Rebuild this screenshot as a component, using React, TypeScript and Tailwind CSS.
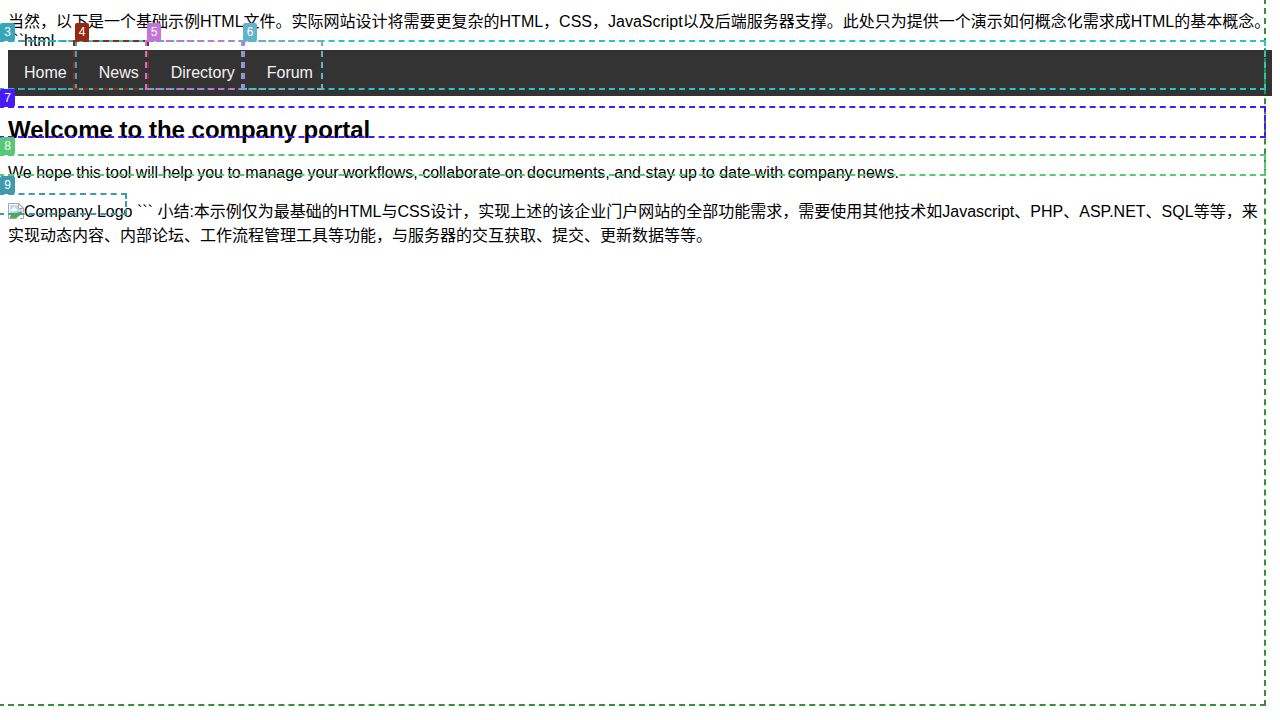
type Mark = { id: string; label?: string; box: string; tag?: string };

const marks: Mark[] = [
  { id: "page", box: "-left-0.5 -top-0.5 right-[14px] bottom-[14px] border-[#388e3c]" },
  { id: "nav", box: "-left-0.5 top-[40px] right-[14px] h-[50px] border-[#26c6c6]" },
  { id: "home", label: "3", box: "-left-0.5 top-[40px] w-[79px] h-[50px] border-[#36a6b8]", tag: "w-[15px] bg-[#36a6b8]" },
  { id: "news", label: "4", box: "left-[73px] top-[40px] w-[76px] h-[50px] border-[#942810]", tag: "w-3.5 bg-[#942810]" },
  { id: "directory", label: "5", box: "left-[145px] top-[40px] w-[100px] h-[50px] border-[#c473d8]", tag: "w-3.5 bg-[#c473d8]" },
  { id: "forum", label: "6", box: "left-[241px] top-[40px] w-[82px] h-[50px] border-[#63b2c8]", tag: "w-3.5 bg-[#63b2c8]" },
  { id: "title", label: "7", box: "-left-0.5 top-[106px] right-[14px] h-[32px] border-[#4619ff]", tag: "w-[15px] bg-[#4619ff]" },
  { id: "intro", label: "8", box: "-left-0.5 top-[154px] right-[14px] h-[22px] border-[#57c878]", tag: "w-[15px] bg-[#57c878]" },
  { id: "logo", label: "9", box: "-left-0.5 top-[193px] w-[129px] h-[22px] border-[#409aab]", tag: "w-[15px] bg-[#409aab]" },
];

const links = ["Home", "News", "Directory", "Forum"];

function BrokenImage() {
  return (
    <svg className="inline-block size-4 align-[-2px]" viewBox="0 0 16 16" aria-hidden="true">
      <path d="M.5.5h10.500l4.500 4.500v10.500H.5z" fill="#fff" stroke="#a6a6a6" />
      <path d="M2 2h8.500v4H14v8H2z" fill="#c1d7f7" />
      <path d="M3 8C2.300 6.500 3.300 5.500 4.300 5.700 5 3.700 7.500 4 7.700 5.800 9.300 5.800 9.300 8 8 8z" fill="#fff" />
      <path d="M2 14c1.500-3 4.500-4.500 7.500-4.500L14 8.500v2L8.500 15H2z" fill="#52ae3d" />
      <path d="M10.500.5v5h5z" fill="#fff" stroke="#a6a6a6" />
      <path d="M8 16l8-7v2.500L11.500 16z" fill="#fff" />
    </svg>
  );
}

export default function App() {
  return (
    <div className="relative min-h-screen overflow-hidden bg-white p-2 font-['Liberation_Sans','Noto_Sans_CJK_SC',sans-serif] text-base leading-[normal] text-black">
      <p className="whitespace-nowrap">
        当然，以下是一个基础示例HTML文件。实际网站设计将需要更复杂的HTML，CSS，JavaScript以及后端服务器支撑。此处只为提供一个演示如何概念化需求成HTML的基本概念。
      </p>
      <p className="leading-[18px]">```html</p>
      <nav className="flex bg-[#333]">
        {links.map((name) => (
          <a key={name} href="#" className="px-4 py-3.5 leading-[18px] text-[#f2f2f2]">
            {name}
          </a>
        ))}
      </nav>
      <h2 className="my-5 text-2xl leading-7 font-bold">Welcome to the company portal</h2>
      <p className="my-4 leading-[18px]">
        We hope this tool will help you to manage your workflows, collaborate on documents, and stay up to date with company news.
      </p>
      <p>
        <BrokenImage />
        Company Logo ``` 小结:本示例仅为最基础的HTML与CSS设计，实现上述的该企业门户网站的全部功能需求，需要使用其他技术如Javascript、PHP、ASP.NET、SQL等等，来实现动态内容、内部论坛、工作流程管理工具等功能，与服务器的交互获取、提交、更新数据等等。
      </p>
      <div className="pointer-events-none absolute inset-0 overflow-hidden">
        {marks.map((mark) => (
          <div key={mark.id} className={`absolute border-2 border-dashed ${mark.box}`}>
            {mark.label && (
              <span className={`absolute -top-[19px] left-0 flex justify-center rounded-xs py-0.5 text-xs leading-[14px] text-white ${mark.tag}`}>
                {mark.label}
              </span>
            )}
          </div>
        ))}
      </div>
    </div>
  );
}
